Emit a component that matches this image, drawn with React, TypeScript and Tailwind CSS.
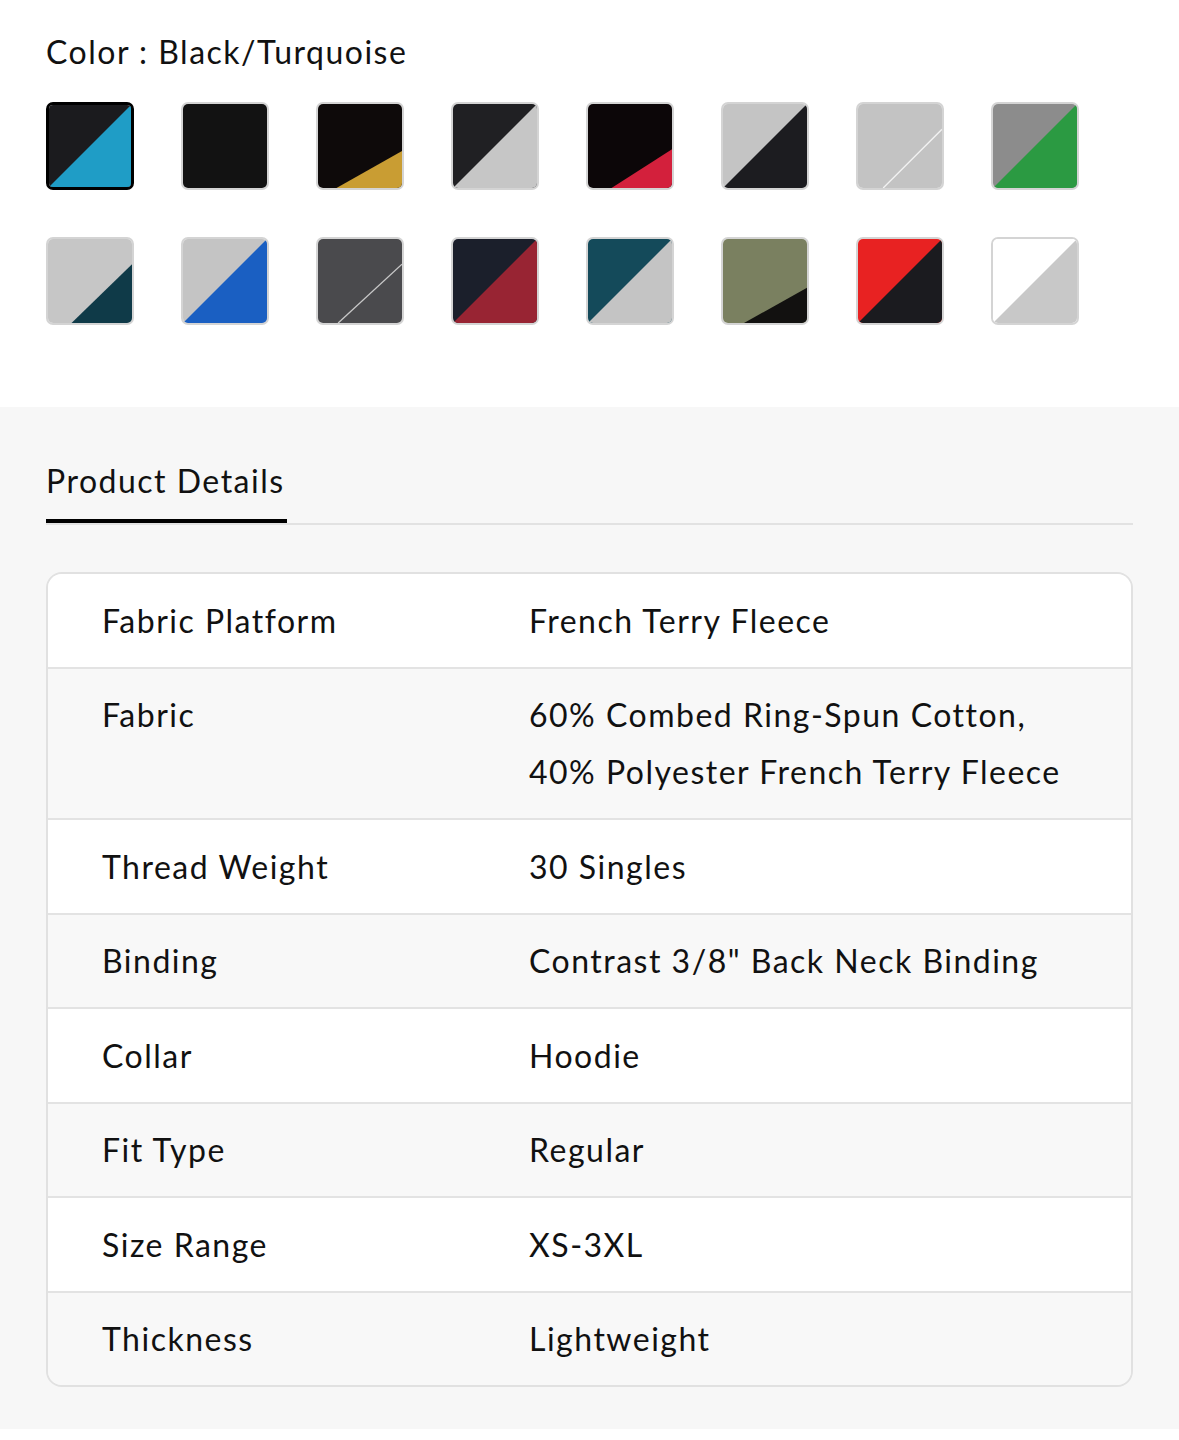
import React from "react";

type Swatch = {
  a: string;
  b?: string;
  poly?: string;
  line?: string;
  lineColor?: string;
  selected?: boolean;
};

const swatches: Swatch[] = [
  { a: "#1b1b1e", b: "#1f9dc6", poly: "0,100 100,0 100,100", selected: true },
  { a: "#121212" },
  { a: "#0e0a0a", b: "#c99d33", poly: "22,100 100,56 100,100" },
  { a: "#202023", b: "#c6c6c6", poly: "0,100 100,0 100,100" },
  { a: "#0c0608", b: "#d3203c", poly: "28,100 100,54 100,100" },
  { a: "#c4c4c4", b: "#1c1c20", poly: "0,100 100,0 100,100" },
  { a: "#c3c3c3", line: "30,100 100,30", lineColor: "#f2f2f2" },
  { a: "#8c8c8c", b: "#2b9a42", poly: "0,100 100,0 100,100" },
  { a: "#c6c6c6", b: "#0f3a48", poly: "28,100 100,30 100,100" },
  { a: "#c4c4c4", b: "#1a5fc2", poly: "0,100 100,0 100,100" },
  { a: "#4a4a4d", line: "24,100 100,30", lineColor: "#c8c8c8" },
  { a: "#1b1f2b", b: "#982433", poly: "0,100 100,0 100,100" },
  { a: "#144a5a", b: "#c4c4c4", poly: "0,100 100,0 100,100" },
  { a: "#7a8060", b: "#121110", poly: "25,100 100,58 100,100" },
  { a: "#e82222", b: "#1b1b1f", poly: "0,100 100,0 100,100" },
  { a: "#ffffff", b: "#c8c8c8", poly: "0,100 100,0 100,100" },
];

function SwatchBox({ s }: { s: Swatch }) {
  const [x1, y1, x2, y2] = s.line
    ? s.line.split(/[ ,]/).map(Number)
    : [0, 0, 0, 0];
  return (
    <div
      className={
        "w-[88px] h-[88px] rounded-[7px] overflow-hidden " +
        (s.selected ? "border-[3px] border-black" : "border-2 border-[#d4d4d4]")
      }
    >
      <svg viewBox="0 0 100 100" preserveAspectRatio="none" className="w-full h-full block">
        <rect x="0" y="0" width="100" height="100" fill={s.a} />
        {s.b && s.poly && <polygon points={s.poly} fill={s.b} />}
        {s.line && (
          <line x1={x1} y1={y1} x2={x2} y2={y2} stroke={s.lineColor} strokeWidth="1.6" />
        )}
      </svg>
    </div>
  );
}

const rows: [string, string[]][] = [
  ["Fabric Platform", ["French Terry Fleece"]],
  ["Fabric", ["60% Combed Ring-Spun Cotton,", "40% Polyester French Terry Fleece"]],
  ["Thread Weight", ["30 Singles"]],
  ["Binding", ['Contrast 3/8" Back Neck Binding']],
  ["Collar", ["Hoodie"]],
  ["Fit Type", ["Regular"]],
  ["Size Range", ["XS-3XL"]],
  ["Thickness", ["Lightweight"]],
];

export default function App() {
  return (
    <div className="w-[1179px] bg-white text-[#111] font-['Lato','Liberation_Sans',sans-serif] tracking-[1.5px]">
      <section className="h-[407px] px-[46px] pt-[30px]">
        <div className="text-[32px] leading-[44px]">Color : Black/Turquoise</div>
        <div className="mt-[28px] grid grid-cols-[repeat(8,88px)] gap-x-[47px] gap-y-[47px]">
          {swatches.map((s, i) => (
            <SwatchBox key={i} s={s} />
          ))}
        </div>
      </section>
      <section className="bg-[#f7f7f7] px-[46px] pt-[54px] pb-[42px]">
        <div className="border-b-2 border-[#e2e2e2] flex">
          <div className="text-[32px] leading-[40px] pb-[18px] border-b-4 border-black w-[241px]">
            Product Details
          </div>
        </div>
        <div className="mt-[47px] border-2 border-[#e1e1e1] rounded-[16px] overflow-hidden">
          {rows.map(([label, vals], i) => (
            <div
              key={label}
              className={
                "flex text-[32px] leading-[57px] py-[17.75px] " +
                (i % 2 === 0 ? "bg-white" : "bg-[#f8f8f8]") +
                (i < rows.length - 1 ? " border-b-2 border-[#e3e3e3]" : "")
              }
            >
              <div className="w-[481px] pl-[54px] shrink-0">{label}</div>
              <div>
                {vals.map((v) => (
                  <div key={v}>{v}</div>
                ))}
              </div>
            </div>
          ))}
        </div>
      </section>
      <div className="h-[12px] bg-white" />
    </div>
  );
}
